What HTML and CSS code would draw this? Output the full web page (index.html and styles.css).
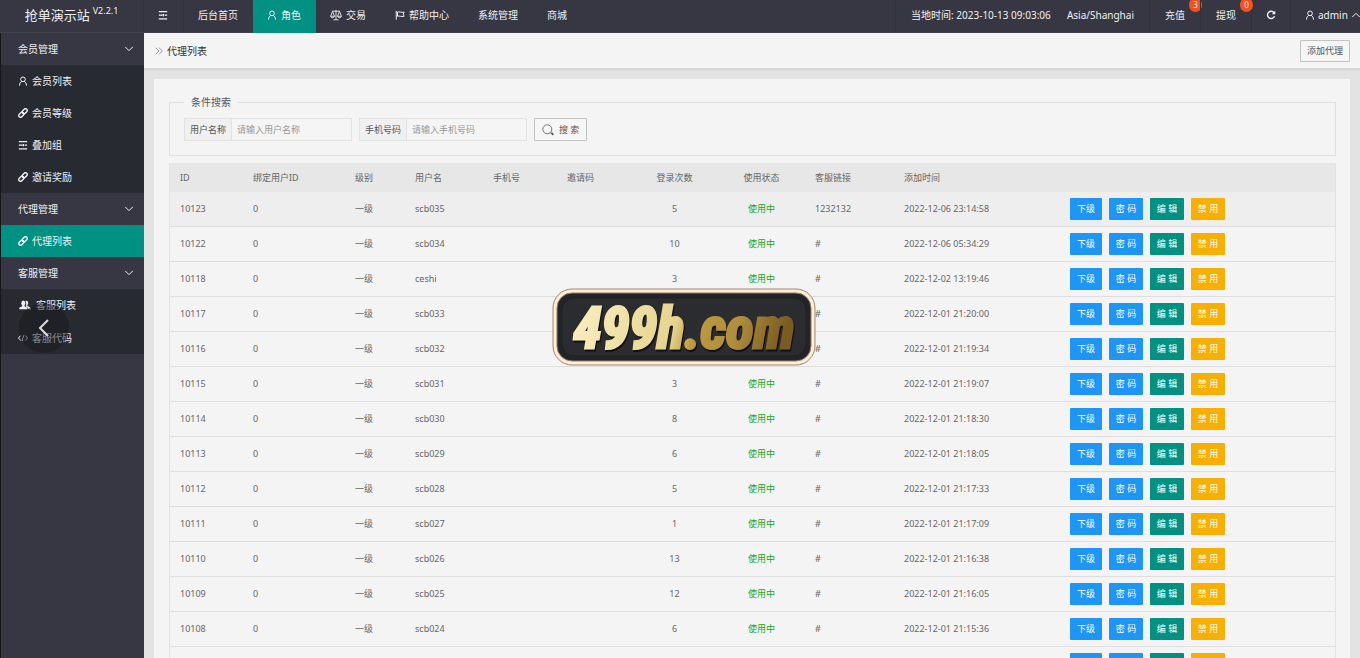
FILE: index.html
```html
<!DOCTYPE html>
<html lang="zh-CN">
<head>
<meta charset="utf-8">
<title>代理列表</title>
<link rel="stylesheet" href="styles.css">
</head>
<body>
<svg class="sprite" aria-hidden="true">
  <symbol id="user" viewBox="0 0 12 12"><circle cx="6" cy="4" r="2.8"/><path d="M1.8 11.5C2 8.500 3.200 7 4.600 6.500M7.400 6.500C8.800 7 10 8.500 10.200 11.500"/></symbol>
  <symbol id="link" viewBox="0 0 12 12"><g transform="rotate(-45 6 6)" stroke-width="1.700"><rect x="-.3" y="3.900" width="6.800" height="4.200" rx="2.100"/><rect x="5.500" y="3.900" width="6.800" height="4.200" rx="2.100"/></g></symbol>
  <symbol id="lines" viewBox="0 0 12 12"><path d="M1 2h10M1 10.500h10M1 6.200h4.500M8 6.200h3M6.500 4.800v2.800" stroke-width="1.500"/></symbol>
  <symbol id="down" viewBox="0 0 12 12"><path d="M1.500 3.500L6 8l4.500-4.500"/></symbol>
  <symbol id="scale" viewBox="0 0 12 12"><path d="M6 1v9.500M3.500 10.800h5M2 2.200h8M2.500 2.500L.6 7.300h4zM9.500 2.500l-2 4.800h4zM.7 7.500c.5 1.700 3.200 1.700 3.700 0M7.600 7.500c.5 1.700 3.200 1.700 3.700 0" stroke-width=".9"/></symbol>
  <symbol id="flag" viewBox="0 0 12 12"><path d="M1.500 1v10.500M3 2.500c2.500-1 4 1 8 0L9.800 5l1.200 2.500c-4 1-5.500-1-8 0z"/></symbol>
  <symbol id="refresh" viewBox="0 0 12 12"><path d="M10 3.600A4.400 4.400 0 1 0 10.300 7.500" stroke-width="1.700"/><path d="M11.200.8v4.400H6.800z" fill="currentColor" stroke="none"/></symbol>
  <symbol id="users" viewBox="0 0 14 12"><g fill="currentColor" stroke="none"><ellipse cx="5" cy="3.800" rx="2.400" ry="3.100"/><path d="M0 11c0-2.500 2-2.600 3.700-3.400V6h2.600v1.600C8 8.400 10 8.500 10 11z"/><path d="M7.500 1.200c3.300-1.200 4.400 3 2.300 5.300v.8c1.800.8 4.200 1 4.200 3.700h-3.200c0-2-1.300-2.700-2.700-3.300C8.600 5.800 8.800 3.500 7.500 1.200z"/></g></symbol>
  <symbol id="code" viewBox="0 0 12 12"><path d="M3.200 3L.6 6l2.600 3M8.800 3l2.600 3-2.600 3M7 2.500l-2 7"/></symbol>
  <symbol id="chevrons" viewBox="0 0 12 12"><path d="M2 2l4 4-4 4M6 2l4 4-4 4"/></symbol>
  <symbol id="search" viewBox="0 0 12 12"><circle cx="5.300" cy="5.300" r="4.500"/><path d="M8.800 8.700l.8 1 1.300 1.200M10.300 8.800l1 2.200" stroke-width="1.200"/></symbol>
</svg>

<header class="topbar">
  <a class="logo" href="#">抢单演示站<sup>V2.2.1</sup></a>
  <nav class="topnav">
    <button class="fold" type="button" aria-label="菜单"><svg class="icon"><use href="#lines"/></svg></button>
    <a href="#">后台首页</a>
    <a href="#" class="active"><svg class="icon"><use href="#user"/></svg>角色</a>
    <a href="#"><svg class="icon"><use href="#scale"/></svg>交易</a>
    <a href="#"><svg class="icon"><use href="#flag"/></svg>帮助中心</a>
    <a href="#">系统管理</a>
    <a href="#">商城</a>
  </nav>
  <div class="tools">
    <div class="clock"><span>当地时间: 2023-10-13 09:03:06</span><span>Asia/Shanghai</span></div>
    <a href="#" class="count">充值<span class="badge">3</span></a>
    <a href="#" class="count">提现<span class="badge">0</span></a>
    <button class="reload" type="button" aria-label="刷新"><svg class="icon"><use href="#refresh"/></svg></button>
    <a href="#" class="account"><svg class="icon"><use href="#user"/></svg>admin<svg class="icon caret"><use href="#down"/></svg></a>
  </div>
</header>

<div class="layout">
  <nav class="sidebar">
    <a href="#" class="group">会员管理<svg class="icon"><use href="#down"/></svg></a>
    <a href="#"><svg class="icon"><use href="#user"/></svg>会员列表</a>
    <a href="#"><svg class="icon"><use href="#link"/></svg>会员等级</a>
    <a href="#"><svg class="icon"><use href="#lines"/></svg>叠加组</a>
    <a href="#"><svg class="icon"><use href="#link"/></svg>邀请奖励</a>
    <a href="#" class="group">代理管理<svg class="icon"><use href="#down"/></svg></a>
    <a href="#" class="active"><svg class="icon"><use href="#link"/></svg>代理列表</a>
    <a href="#" class="group">客服管理<svg class="icon"><use href="#down"/></svg></a>
    <a href="#"><svg class="icon wide"><use href="#users"/></svg>客服列表</a>
    <a href="#"><svg class="icon"><use href="#code"/></svg>客服代码</a>
  </nav>

  <main class="content">
    <div class="crumbs">
      <h1><svg class="icon"><use href="#chevrons"/></svg>代理列表</h1>
      <button class="plain" type="button">添加代理</button>
    </div>
    <section class="card">
      <form>
        <fieldset>
          <legend>条件搜索</legend>
          <div class="filters">
            <div class="field"><label for="name">用户名称</label><input id="name" type="text" placeholder="请输入用户名称"></div>
            <div class="field"><label for="phone">手机号码</label><input id="phone" type="text" placeholder="请输入手机号码"></div>
            <button class="plain search" type="button"><svg class="icon"><use href="#search"/></svg>搜 索</button>
          </div>
        </fieldset>
      </form>
      <table>
        <colgroup>
          <col class="c-id"><col class="c-bind"><col class="c-level"><col class="c-user"><col class="c-phone"><col class="c-phone"><col class="c-mid"><col class="c-mid"><col class="c-link"><col class="c-time"><col>
        </colgroup>
        <thead>
          <tr><th>ID</th><th>绑定用户ID</th><th>级别</th><th>用户名</th><th>手机号</th><th>邀请码</th><th class="mid">登录次数</th><th class="mid">使用状态</th><th>客服链接</th><th>添加时间</th><th></th></tr>
        </thead>
        <tbody id="rows"></tbody>
      </table>
    </section>
  </main>
</div>

<button class="prev" type="button" aria-label="上一张"><svg viewBox="0 0 12 20"><path d="M10 2L2 10l8 8"/></svg></button>

<svg class="mark" viewBox="0 0 266 80" role="img" aria-label="499h.com">
  <defs>
    <linearGradient id="gold" x1="0" x2="1" y1="0" y2="0.100">
      <stop offset="0" stop-color="#fbf0c4"/><stop offset=".5" stop-color="#e6d48d"/><stop offset=".6" stop-color="#bd9a3c"/><stop offset=".78" stop-color="#b08e3c"/><stop offset="1" stop-color="#7a5c20"/>
    </linearGradient>
  </defs>
  <rect x="2" y="2" width="262" height="76" rx="19" fill="#fbe8cc" stroke="#a08a72"/>
  <rect x="4" y="4" width="258" height="72" rx="17" fill="none" stroke="#fff6e6" stroke-width="1"/>
  <rect x="6" y="6" width="254" height="68" rx="15" fill="#232427" stroke="#93806a"/>
  <rect x="11" y="11" width="244" height="58" rx="12" fill="#2b2c2f" stroke="#1f2022"/>
  <text class="mark-shadow" x="134" y="63" text-anchor="middle">499h.com</text>
  <text class="mark-text" x="133" y="61" text-anchor="middle">499h.com</text>
</svg>
<script src="rows.js"></script>
</body>
</html>
```
FILE: styles.css
```css
* { box-sizing: border-box; }
body {
  margin: 0;
  height: 100vh;
  overflow: hidden;
  display: flex;
  flex-direction: column;
  font: 10px/14px "Noto Sans", "Noto Sans CJK SC", sans-serif;
  color: #555;
  background: #e3e3e3;
}
a { color: inherit; text-decoration: none; }
button, input { font: inherit; color: inherit; }
.sprite { position: absolute; width: 0; height: 0; }
.icon { width: 10px; height: 10px; flex: none; fill: none; stroke: currentColor; stroke-width: 1.2; }

.topbar { display: flex; flex: none; height: 33px; background: #373743; color: #f0f0f2; border-bottom: 1px solid #41414c; }
.logo { flex: none; width: 144px; display: flex; align-items: center; justify-content: center; font-size: 13px; line-height: 28px; gap: 3px; padding-bottom: 3px; border-right: 1px solid #30303a; }
.logo sup { font-size: 9px; line-height: 10px; padding-bottom: 8px; }
.topnav { display: flex; flex: 1; }
.topnav a, .topnav button { display: flex; align-items: center; gap: 4px; padding: 0 15px 3px 14px; white-space: nowrap; }
.topnav .fold { width: 40px; border: 0; border-right: 1px solid #30303a; background: none; }
.topnav a:nth-of-type(3) .icon { width: 12px; height: 12px; }
.topbar .active { background: #009182; margin-bottom: -1px; }
.tools { display: flex; flex: none; }
.tools > * { display: flex; align-items: center; justify-content: center; padding: 0 0 3px; border: 0; border-left: 1px solid #30303a; background: none; white-space: nowrap; }
.tools .clock { width: 254px; padding: 0 15px 3px; justify-content: space-between; }
.tools .count { position: relative; width: 51px; }
.badge { position: absolute; top: -2px; left: 39px; width: 13px; height: 14px; border-radius: 7px; background: #f4511e; font-size: 8px; text-align: center; }
.tools .reload { width: 39px; }
.tools .account { width: 70px; padding-left: 14px; justify-content: flex-start; gap: 3px; overflow: hidden; }
.caret { transform: rotate(180deg); }

.layout { display: flex; flex: 1; min-height: 0; }
.sidebar { flex: none; width: 144px; background: #373743; color: #f0f0f2; border-left: 1px solid #16161b; }
.sidebar a { display: flex; align-items: center; gap: 4px; height: 32px; padding: 0 10px 0 17px; background: #282a32; }
.sidebar .group { justify-content: space-between; background: #373743; }
.sidebar .group:last-of-type, .sidebar a:last-child { height: 33px; }
.sidebar .active { background: #009182; }
.sidebar .wide { width: 14px; }

.content { flex: 1; min-width: 0; overflow: hidden; }
.crumbs { display: flex; align-items: center; justify-content: space-between; height: 36px; padding: 0 10px; background: #f4f4f4; border-bottom: 1px solid #d8d8d8; box-shadow: 0 1px 2px #d0d0d0; }
.crumbs h1 { display: flex; align-items: center; gap: 3px; margin: 0; font-size: 10px; font-weight: 400; color: #333; }
.crumbs h1 .icon { color: #999; }
.plain { height: 22px; padding: 0 6px; border: 1px solid #c2c2c2; border-radius: 1px; background: #f6f6f6; font-size: 9px; line-height: 12px; }
.card { margin: 10px 10px 0; padding: 16px 14px 20px 15px; background: #f4f4f4; }

fieldset { margin: 0; padding: 9px 14px 14px; border: 1px solid #e0e0e0; }
legend { padding: 0 7px; }
.filters { display: flex; gap: 7px; }
.field { display: flex; height: 23px; border: 1px solid #e2e2e2; font-size: 9px; }
.field label { padding: 4px 5px; width: 47px; background: #f0f0f0; border-right: 1px solid #e2e2e2; white-space: nowrap; }
.field input { width: 119px; padding: 0 5px; border: 0; outline: 0; background: #f5f5f5; }
.field input::placeholder { color: #999; }
.search { display: flex; align-items: center; gap: 5px; height: 23px; padding: 0 7px; }
.search .icon { width: 12px; height: 12px; stroke-width: .8; }

table { width: 100%; margin-top: 7px; table-layout: fixed; border-collapse: separate; border-spacing: 0; border: 1px solid #e2e2e2; border-top: 0; font-size: 9px; line-height: 12px; color: #666; }
th, td { padding: 0 10px; text-align: left; font-weight: 400; white-space: nowrap; }
th { height: 29px; background: #e7e7e7; }
td { height: 35px; border-bottom: 1px solid #dedede; }
tbody tr:first-child td { background: #eee; }
.c-id { width: 73px; }
.c-bind { width: 102px; }
.c-level { width: 60px; }
.c-user { width: 78px; }
.c-phone { width: 74px; }
.c-mid { width: 87px; }
.c-link { width: 89px; }
.c-time { width: 166px; }
.mid { text-align: center; }
.on { color: #1ba51b; }
.ops { display: flex; gap: 7px; }
.ops button { width: 34px; height: 22px; padding: 0; border: 0; border-radius: 1px; color: #fff; background: #1e96f5; }
.ops button:first-child { width: 32px; }
.ops .edit { background: #009182; }
.ops .ban { background: #f7b000; }

.prev { position: absolute; left: 19px; top: 303px; width: 50px; height: 50px; border: 0; border-radius: 50%; background: rgba(24, 24, 27, .5); }
.prev svg { width: 12px; height: 20px; fill: none; stroke: #ddd; stroke-width: 2; vertical-align: middle; }
.mark { position: absolute; left: 551px; top: 287px; width: 266px; height: 80px; }
.mark text { font: italic 700 57px "Liberation Sans Narrow", "Roboto Condensed", Roboto, sans-serif; }
.mark-text { fill: url(#gold); stroke: url(#gold); stroke-width: 3; }
.mark-shadow { fill: #101012; stroke: #101012; stroke-width: 3; }
```
FILE: rows.js
```js
const rows = [
  [10123, "scb035", 5, "1232132", "2022-12-06 23:14:58"],
  [10122, "scb034", 10, "#", "2022-12-06 05:34:29"],
  [10118, "ceshi", 3, "#", "2022-12-02 13:19:46"],
  [10117, "scb033", "", "#", "2022-12-01 21:20:00"],
  [10116, "scb032", "", "#", "2022-12-01 21:19:34"],
  [10115, "scb031", 3, "#", "2022-12-01 21:19:07"],
  [10114, "scb030", 8, "#", "2022-12-01 21:18:30"],
  [10113, "scb029", 6, "#", "2022-12-01 21:18:05"],
  [10112, "scb028", 5, "#", "2022-12-01 21:17:33"],
  [10111, "scb027", 1, "#", "2022-12-01 21:17:09"],
  [10110, "scb026", 13, "#", "2022-12-01 21:16:38"],
  [10109, "scb025", 12, "#", "2022-12-01 21:16:05"],
  [10108, "scb024", 6, "#", "2022-12-01 21:15:36"],
  [10107, "scb023", "", "#", ""]
];
document.getElementById("rows").innerHTML = rows.map(([id, user, logins, link, time]) => `
  <tr>
    <td>${id}</td><td>0</td><td>一级</td><td>${user}</td><td></td><td></td>
    <td class="mid">${logins}</td><td class="mid on">使用中</td><td>${link}</td><td>${time}</td>
    <td><div class="ops"><button type="button">下级</button><button type="button">密 码</button><button type="button" class="edit">编 辑</button><button type="button" class="ban">禁 用</button></div></td>
  </tr>`).join("");
```
